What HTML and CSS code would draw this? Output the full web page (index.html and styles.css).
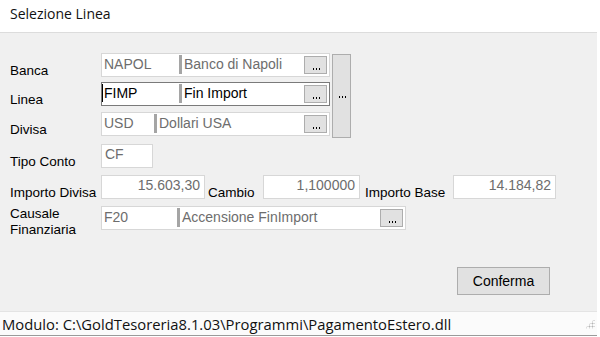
FILE: index.html
```html
<!DOCTYPE html>
<html lang="it">
<head>
    <meta charset="UTF-8">
    <meta name="viewport" content="width=device-width, initial-scale=1.0">
    <title>Selezione Linea</title>
    <link rel="stylesheet" href="styles.css">
</head>
<body>
    <div class="title">Selezione Linea</div>

    <div class="panel">
        <div class="group">
            <div class="rows">
                <div class="row">
                    <label class="lbl">Banca</label>
                    <div class="lookup disabled">
                        <span class="code" style="width: 77px">NAPOL</span>
                        <span class="desc">Banco di Napoli</span>
                        <button class="dots"><span></span></button>
                    </div>
                </div>
                <div class="row">
                    <label class="lbl">Linea</label>
                    <div class="lookup active">
                        <span class="code" style="width: 77px">FIMP</span>
                        <span class="desc">Fin Import</span>
                        <button class="dots"><span></span></button>
                    </div>
                </div>
                <div class="row">
                    <label class="lbl">Divisa</label>
                    <div class="lookup disabled">
                        <span class="code" style="width: 52px">USD</span>
                        <span class="desc">Dollari USA</span>
                        <button class="dots"><span></span></button>
                    </div>
                </div>
            </div>
            <button class="bigdots"><span></span></button>
        </div>

        <div class="row tipo">
            <label class="lbl">Tipo Conto</label>
            <span class="field tipoconto">CF</span>
        </div>

        <div class="row importi">
            <label class="lbl">Importo Divisa</label>
            <span class="field num imp-divisa">15.603,30</span>
            <label class="lbl-inline cambio">Cambio</label>
            <span class="field num imp-cambio">1,100000</span>
            <label class="lbl-inline base">Importo Base</label>
            <span class="field num imp-base">14.184,82</span>
        </div>

        <div class="row causale">
            <label class="lbl two">Causale<br>Finanziaria</label>
            <div class="lookup disabled wide">
                <span class="code" style="width: 75px">F20</span>
                <span class="desc">Accensione FinImport</span>
                <button class="dots"><span></span></button>
            </div>
        </div>

        <div class="actions">
            <button class="btn">Conferma</button>
        </div>
    </div>

    <div class="status">
        <span>Modulo: C:\GoldTesoreria8.1.03\Programmi\PagamentoEstero.dll</span>
        <span class="grip"></span>
    </div>
</body>
</html>
```

FILE: styles.css
```css
body {
    margin: 0;
    width: 600px;
    height: 337px;
    overflow: hidden;
    background: #fff;
    font-family: "Liberation Sans", Arial, sans-serif;
    font-size: 13.5px;
    color: #000;
}
.title {
    height: 32px;
    padding-left: 10px;
    line-height: 28px;
    font-family: "Open Sans", "Noto Sans", sans-serif;
    font-size: 14px;
    color: #111;
}
.panel {
    margin-right: 3px;
    height: 279px;
    background: #f0f0f0;
    border-top: 1px solid #dcdcdc;
    padding-top: 20px;
    box-sizing: border-box;
}
.group {
    display: flex;
    align-items: flex-start;
}
.rows {
    display: flex;
    flex-direction: column;
    gap: 5px;
}
.row {
    display: flex;
    align-items: flex-end;
    height: 24px;
}
.rows .row:nth-child(3) {
    margin-top: 1px;
}
.lbl {
    width: 101px;
    padding-left: 10px;
    box-sizing: border-box;
    flex-shrink: 0;
    white-space: nowrap;
    line-height: 15px;
    margin-bottom: -1px;
}
.lookup {
    display: flex;
    align-items: center;
    width: 229px;
    height: 24px;
    box-sizing: border-box;
    background: #fff;
    border: 1px solid #d7d7d7;
    font-size: 14px;
}
.lookup.active {
    border-color: #7a7a7a;
}
.lookup.wide {
    width: 305px;
}
.code {
    padding-left: 2px;
    box-sizing: border-box;
    flex-shrink: 0;
    line-height: 20px;
    align-self: flex-start;
}
.desc {
    flex: 1;
    align-self: stretch;
    border-left: 3px solid #a5a5a5;
    padding-left: 2px;
    line-height: 18px;
    margin: 1px 0 2px;
}
.disabled .code,
.disabled .desc {
    color: #6d6d6d;
}
.active .code {
    border-left: 1px solid #000;
    padding-left: 1px;
    line-height: 18px;
    margin-top: 1px;
}
.dots {
    width: 23px;
    height: 18px;
    margin-right: 2px;
    padding: 0;
    background: #e1e1e1;
    border: 1px solid #adadad;
    position: relative;
    flex-shrink: 0;
}
.dots span,
.bigdots span {
    position: absolute;
    left: 50%;
    width: 8px;
    height: 2px;
    margin-left: -4px;
    background: radial-gradient(circle, #000 0.9px, transparent 1px) 0 0 / 3px 2px repeat-x;
}
.dots span {
    bottom: 3px;
}
.bigdots {
    width: 19px;
    height: 84px;
    margin-left: 2px;
    margin-top: 1px;
    padding: 0;
    background: #e1e1e1;
    border: 1px solid #adadad;
    position: relative;
}
.bigdots span {
    top: 41px;
}
.tipo {
    margin-top: 6px;
}
.field {
    display: block;
    height: 24px;
    box-sizing: border-box;
    background: #fff;
    border: 1px solid #d7d7d7;
    color: #6d6d6d;
    padding: 0 3px;
    line-height: 18px;
    font-size: 14px;
    flex-shrink: 0;
}
.tipoconto {
    width: 52px;
}
.num {
    text-align: right;
    padding-right: 4px;
}
.importi {
    margin-top: 7px;
}
.imp-divisa {
    width: 104px;
}
.lbl-inline {
    line-height: 15px;
    margin-bottom: -1px;
    white-space: nowrap;
    flex-shrink: 0;
}
.cambio {
    width: 58px;
    padding-left: 3px;
    box-sizing: border-box;
}
.imp-cambio {
    width: 97px;
}
.base {
    width: 93px;
    padding-left: 5px;
    box-sizing: border-box;
}
.imp-base {
    width: 103px;
}
.causale {
    margin-top: 7px;
    align-items: flex-start;
}
.lbl.two {
    line-height: 16px;
    margin-top: 0;
    margin-bottom: 0;
}
.actions {
    display: flex;
    justify-content: flex-end;
    padding-right: 47px;
    margin-top: 37px;
}
.btn {
    width: 93px;
    height: 28px;
    background: #e1e1e1;
    border: 1px solid #adadad;
    font-family: "Liberation Sans", Arial, sans-serif;
    font-size: 14px;
    color: #000;
    padding: 0;
}
.status {
    display: flex;
    align-items: center;
    justify-content: space-between;
    height: 25px;
    box-sizing: border-box;
    margin-right: 3px;
    background: #fbfbfb;
    border-top: 1px solid #e4e4e4;
    border-bottom: 1px solid #9a9a9a;
    padding-left: 2px;
    font-family: "Open Sans", "Noto Sans", sans-serif;
    font-size: 14.8px;
    color: #111;
}
.grip {
    width: 10px;
    height: 10px;
    margin-right: 2px;
    background: radial-gradient(circle, #b5b5b5 0.9px, transparent 1.1px) 0 0 / 3px 3px;
    clip-path: polygon(100% 0, 100% 100%, 0 100%);
}
```
